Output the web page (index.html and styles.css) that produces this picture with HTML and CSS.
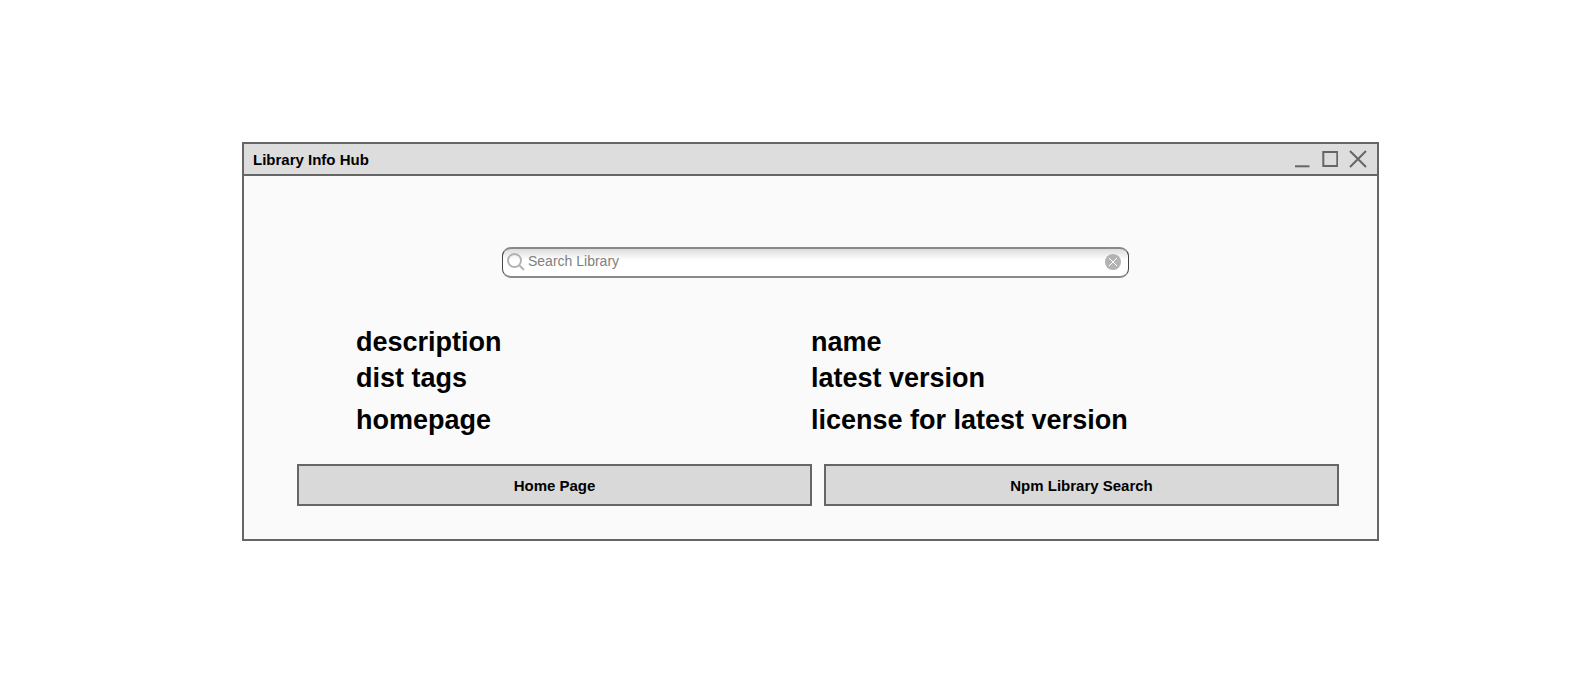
FILE: index.html
```html
<!DOCTYPE html>
<html lang="en">
<head>
<meta charset="utf-8">
<title>Library Info Hub</title>
<link rel="stylesheet" href="styles.css">
</head>
<body>
<div class="window">
  <header class="titlebar">
    <span class="title">Library Info Hub</span>
    <div class="controls">
      <svg width="16" height="18" viewBox="0 0 16 18"><path d="M0 16.3H14.5" stroke="#666" stroke-width="2" fill="none"/></svg>
      <svg width="16" height="18" viewBox="0 0 16 18"><rect x="1.3" y="2" width="14" height="14" stroke="#666" stroke-width="2" fill="none"/></svg>
      <svg width="18" height="18" viewBox="0 0 18 18"><path d="M1 1L17 17M17 1L1 17" stroke="#666" stroke-width="2" fill="none"/></svg>
    </div>
  </header>
  <main class="content">
    <div class="search">
      <svg class="search-icon" width="18" height="18" viewBox="0 0 18 18"><circle cx="7.5" cy="7.5" r="6.5" stroke="#b3b3b3" stroke-width="2" fill="none"/><path d="M12 12L17 17" stroke="#b3b3b3" stroke-width="2" fill="none"/></svg>
      <span class="placeholder">Search Library</span>
      <svg class="clear" width="16" height="16" viewBox="0 0 16 16"><circle cx="8" cy="8" r="8" fill="#b3b3b3"/><path d="M4 4L12 12M12 4L4 12" stroke="#fff" stroke-width="1" fill="none"/></svg>
    </div>
    <div class="info">
      <div class="row row-a"><span>description</span><span>name</span></div>
      <div class="row row-b"><span>dist tags</span><span>latest version</span></div>
      <div class="row row-c"><span>homepage</span><span>license for latest version</span></div>
    </div>
    <div class="buttons">
      <button class="btn">Home Page</button>
      <button class="btn">Npm Library Search</button>
    </div>
  </main>
</div>
</body>
</html>
```
FILE: styles.css
```css
* { box-sizing: border-box; }
html, body { margin: 0; background: #fff; }
body { padding: 142px 0 0 242px; font-family: "Liberation Sans", Arial, sans-serif; color: #000; }
.window { width: 1137px; height: 399px; border: 2px solid #666; background: #fafafa; display: flex; flex-direction: column; }
.titlebar { flex: none; height: 32px; background: #ddd; border-bottom: 2px solid #666; display: flex; align-items: center; justify-content: space-between; padding: 0 10px 0 9px; }
.title { font-size: 15px; font-weight: 700; }
.controls { display: flex; gap: 11px; align-items: center; }
.controls svg { display: block; }
.content { flex: 1; padding: 71px 38px 33px 53px; display: flex; flex-direction: column; }
.search { flex: none; width: 627px; height: 31px; margin-left: 205px; border-style: solid; border-width: 2px 1px; border-color: #888 #444; border-radius: 9px; background: linear-gradient(#dcdcdc, #fff 11px, #fff); display: flex; align-items: center; padding: 0 7px 0 4px; gap: 3px; }
.search-icon { margin-bottom: 1px; }
.placeholder { flex: 1; font-size: 14px; color: #808080; margin-bottom: 3px; }
.clear { margin-bottom: 2px; }
.info { margin-top: 46px; padding-left: 59px; font-size: 27px; font-weight: 700; }
.row { display: grid; grid-template-columns: 455px 1fr; }
.row-a { line-height: 36px; }
.row-b { line-height: 36px; }
.row-c { line-height: 48px; }
.buttons { margin-top: 20px; display: grid; grid-template-columns: 515px 515px; gap: 12px; }
.btn { height: 42px; background: #d9d9d9; border: 2px solid #666; font: 700 15px "Liberation Sans", Arial, sans-serif; color: #000; padding: 0; }
```
